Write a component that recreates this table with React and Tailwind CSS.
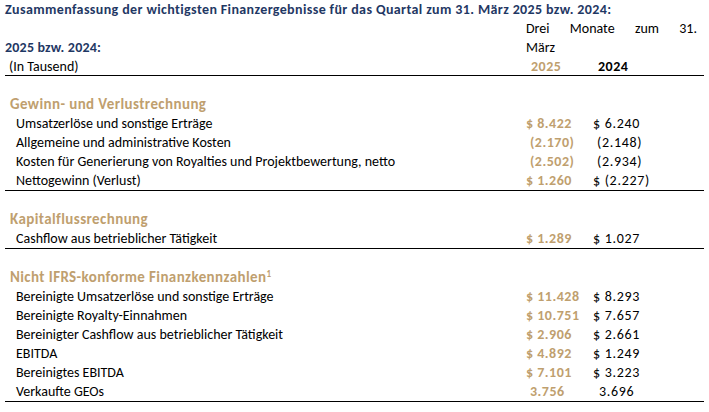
const GOLD = "text-[#bf9f6f]";

const sections = [
  {
    title: "Gewinn- und Verlustrechnung",
    rows: [
      ["Umsatzerlöse und sonstige Erträge", "$ 8.422", "$ 6.240", "", ""],
      ["Allgemeine und administrative Kosten", "(2.170)", "(2.148)", "pl-[4px]", "pl-[4px]"],
      ["Kosten für Generierung von Royalties und Projektbewertung, netto", "(2.502)", "(2.934)", "pl-[4px]", "pl-[4px]"],
      ["Nettogewinn (Verlust)", "$ 1.260", "$ (2.227)", "", ""],
    ],
  },
  {
    title: "Kapitalflussrechnung",
    rows: [["Cashflow aus betrieblicher Tätigkeit", "$ 1.289", "$ 1.027", "", ""]],
  },
  {
    title: "Nicht IFRS-konforme Finanzkennzahlen",
    sup: "1",
    rows: [
      ["Bereinigte Umsatzerlöse und sonstige Erträge", "$ 11.428", "$ 8.293", "", ""],
      ["Bereinigte Royalty-Einnahmen", "$ 10.751", "$ 7.657", "", ""],
      ["Bereinigter Cashflow aus betrieblicher Tätigkeit", "$ 2.906", "$ 2.661", "", ""],
      ["EBITDA", "$ 4.892", "$ 1.249", "", ""],
      ["Bereinigtes EBITDA", "$ 7.101", "$ 3.223", "", ""],
      ["Verkaufte GEOs", "3.756", "3.696", "pl-[4px]", "pl-[6px]"],
    ],
  },
];

function Row({ label, gold, black, gPad, bPad }) {
  return (
    <div className="flex h-[19px] items-center">
      <div className="w-[521px] pl-[11px]">{label}</div>
      <div className={`w-[67px] font-bold tracking-[0.5px] ${GOLD} ${gPad}`}>{gold}</div>
      <div className={`flex-1 tracking-[0.7px] ${bPad}`}>{black}</div>
    </div>
  );
}

export default function App() {
  return (
    <div
      className="w-[709px] h-[412px] bg-white px-[5px] text-[14px] leading-[19px] text-black overflow-hidden"
      style={{ fontFamily: "Carlito, Lato, 'Liberation Sans', sans-serif" }}
    >
      <div className="h-[19px] flex items-center text-[14px] tracking-[0.38px] font-bold text-[#1f3864] whitespace-nowrap">
        Zusammenfassung der wichtigsten Finanzergebnisse für das Quartal zum 31. März 2025 bzw. 2024:
      </div>
      <div className="flex">
        <div className="w-[521px] flex items-end h-[38px]">
          <span className="h-[19px] text-[14px] tracking-[0.2px] font-bold text-[#1f3864]">2025 bzw. 2024:</span>
        </div>
        <div className="w-[171px]">
          <div className="flex justify-between h-[19px] items-center">
            <span>Drei</span>
            <span>Monate</span>
            <span>zum</span>
            <span>31.</span>
          </div>
          <div className="h-[19px]">März</div>
        </div>
      </div>
      <div className="flex h-[19px] items-center border-b-[1.5px] border-black">
        <div className="w-[521px] pl-[4px]">(In Tausend)</div>
        <div className={`w-[67px] pl-[5px] font-bold tracking-[0.5px] ${GOLD}`}>2025</div>
        <div className="flex-1 pl-[5px] font-bold tracking-[0.5px]">2024</div>
      </div>
      {sections.map((s) => (
        <div key={s.title} className="pt-[19px] border-b-[1.5px] border-black">
          <div className={`h-[19px] flex items-center pl-[5px] text-[15px] tracking-[0.4px] font-bold ${GOLD}`}>
            {s.title}
            {s.sup && <span className="self-start mt-[1px] text-[9px] leading-none">{s.sup}</span>}
          </div>
          {s.rows.map(([label, g, b, gp, bp]) => (
            <Row key={label} label={label} gold={g} black={b} gPad={gp} bPad={bp} />
          ))}
        </div>
      ))}
    </div>
  );
}
